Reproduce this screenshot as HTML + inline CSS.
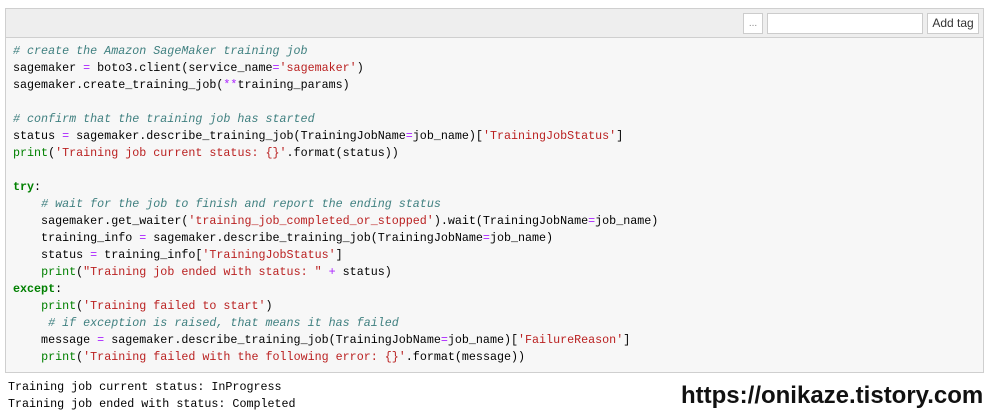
<!DOCTYPE html>
<html><head><meta charset="utf-8"><style>
body{margin:0;width:993px;height:419px;background:#fff;position:relative;overflow:hidden;font-family:"Liberation Sans",sans-serif}
.cell{position:absolute;left:5px;top:8px;width:977px;height:363px;border:1px solid #cfcfcf;background:#f7f7f7}
.hdr{position:absolute;left:0;top:0;width:977px;height:28px;background:#eeeeee;border-bottom:1px solid #cfcfcf}
.btn{position:absolute;top:4px;height:19px;border:1px solid #ccc;background:#fff;font-size:12px;color:#333;line-height:19px;text-align:center;box-sizing:content-box}
pre{position:absolute;left:7px;top:34px;margin:0;font-family:"Liberation Mono",monospace;font-size:11.7px;line-height:17px;color:#000}
.c{color:#408080;font-style:italic}.s{color:#BA2121}.k{color:#008000;font-weight:bold}.o{color:#AA22FF}.b{color:#008000}
.out{position:absolute;left:8px;top:379px;margin:0;font-family:"Liberation Mono",monospace;font-size:11.7px;line-height:17px;color:#000}
.wm{position:absolute;left:681px;top:382px;font-size:24px;font-weight:bold;color:#111;white-space:nowrap}
</style></head><body>
<div class="cell">
<div class="hdr">
<div class="btn" style="left:737px;width:18px;color:#888;font-size:10px">...</div>
<div class="btn" style="left:761px;width:154px"></div>
<div class="btn" style="left:921px;width:50px">Add tag</div>
</div>
<pre><span class="c"># create the Amazon SageMaker training job</span>
sagemaker <span class="o">=</span> boto3.client(service_name<span class="o">=</span><span class="s">'sagemaker'</span>)
sagemaker.create_training_job(<span class="o">**</span>training_params)

<span class="c"># confirm that the training job has started</span>
status <span class="o">=</span> sagemaker.describe_training_job(TrainingJobName<span class="o">=</span>job_name)[<span class="s">'TrainingJobStatus'</span>]
<span class="b">print</span>(<span class="s">'Training job current status: {}'</span>.format(status))

<span class="k">try</span>:
    <span class="c"># wait for the job to finish and report the ending status</span>
    sagemaker.get_waiter(<span class="s">'training_job_completed_or_stopped'</span>).wait(TrainingJobName<span class="o">=</span>job_name)
    training_info <span class="o">=</span> sagemaker.describe_training_job(TrainingJobName<span class="o">=</span>job_name)
    status <span class="o">=</span> training_info[<span class="s">'TrainingJobStatus'</span>]
    <span class="b">print</span>(<span class="s">"Training job ended with status: "</span> <span class="o">+</span> status)
<span class="k">except</span>:
    <span class="b">print</span>(<span class="s">'Training failed to start'</span>)
     <span class="c"># if exception is raised, that means it has failed</span>
    message <span class="o">=</span> sagemaker.describe_training_job(TrainingJobName<span class="o">=</span>job_name)[<span class="s">'FailureReason'</span>]
    <span class="b">print</span>(<span class="s">'Training failed with the following error: {}'</span>.format(message))</pre>
</div>
<pre class="out">Training job current status: InProgress
Training job ended with status: Completed</pre>
<div class="wm">https://onikaze.tistory.com</div>
</body></html>
